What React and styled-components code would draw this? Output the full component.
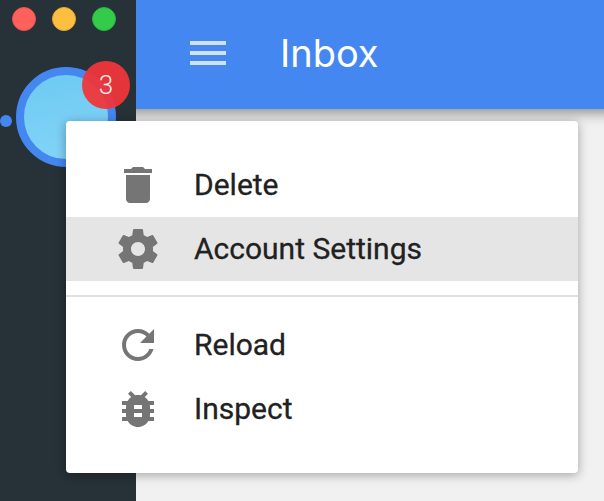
import React from "react";
import styled, { createGlobalStyle } from "styled-components";

const GlobalStyle = createGlobalStyle`
  * { box-sizing: border-box; }
  body { margin: 0; overflow: hidden; font-family: Roboto, sans-serif; -webkit-font-smoothing: antialiased; }
`;

const Window = styled.div`
  position: relative;
  display: flex;
  width: 604px;
  height: 501px;
  overflow: hidden;
  background: #f1f1f1;
`;

const Sidebar = styled.aside`
  display: flex;
  flex-direction: column;
  width: 136px;
  flex: none;
  background: #263238;
`;

const WindowControls = styled.div`
  display: flex;
  gap: 16px;
  padding: 7px 0 0 12px;
`;

const ControlDot = styled.span`
  width: 24px;
  height: 24px;
  border-radius: 50%;
  background: ${(p) => p.$color};
  border: 1px solid ${(p) => p.$edge};
`;

const Account = styled.div`
  position: relative;
  display: flex;
  align-items: center;
  gap: 4px;
  margin-top: 36px;
  height: 100px;
`;

const ActiveDot = styled.span`
  width: 12px;
  height: 12px;
  margin-top: 8px;
  border-radius: 50%;
  background: #4587f0;
`;

const Avatar = styled.div`
  width: 100px;
  height: 100px;
  border-radius: 50%;
  border: 8px solid #4587f0;
  background: linear-gradient(170deg, #6dcaf1, #84d4f8);
`;

const Badge = styled.span`
  position: absolute;
  left: 82px;
  top: -6px;
  width: 48px;
  height: 48px;
  border-radius: 50%;
  background: rgba(238, 54, 58, 0.95);
  color: #fdeced;
  font-size: 26px;
  font-weight: 300;
  line-height: 48px;
  text-align: center;
`;

const Main = styled.main`
  flex: 1;
  overflow: hidden;
`;

const AppBar = styled.header`
  display: flex;
  align-items: center;
  gap: 48px;
  height: 109px;
  margin: 0 -24px;
  padding: 0 72px 3px;
  background: #4587f0;
  color: #fff;
  box-shadow: 0 4px 12px rgba(0, 0, 0, 0.42);
`;

const Title = styled.h1`
  margin: 0;
  font-family: Inter, Roboto, sans-serif;
  font-size: 38px;
  font-weight: 400;
  line-height: 48px;
`;

const Menu = styled.nav`
  position: absolute;
  left: 66px;
  top: 121px;
  width: 512px;
  height: 352px;
  padding: 32px 0;
  border-radius: 4px;
  background: #fff;
  box-shadow: 0 2px 12px rgba(0, 0, 0, 0.24), 0 2px 8px rgba(0, 0, 0, 0.1);
`;

const MenuItem = styled.div`
  display: flex;
  align-items: center;
  gap: 32px;
  height: 64px;
  padding: 0 48px;
  background: ${(p) => (p.$active ? "#e5e5e5" : "transparent")};
  color: #212121;
  font-size: 30px;
  line-height: 64px;
  white-space: nowrap;
  -webkit-text-stroke: 0.3px #212121;
`;

const Divider = styled.hr`
  height: 2px;
  margin: 14px 0 16px;
  border: 0;
  background: #e0e0e0;
`;

const Glyph = styled.svg`
  flex: none;
  width: 48px;
  height: 48px;
  fill: ${(p) => p.$color || "#757575"};
`;

const ICONS = {
  menu: "M3 18h18v-2H3v2zm0-5h18v-2H3v2zm0-7v2h18V6H3z",
  trash: "M6 19c0 1.1.9 2 2 2h8c1.1 0 2-.9 2-2V7H6v12zM19 4h-3.5l-1-1h-5l-1 1H5v2h14V4z",
  settings:
    "M19.43 12.98c.04-.32.07-.64.07-.98s-.03-.66-.07-.98l2.11-1.65c.19-.15.24-.42.12-.64l-2-3.46c-.12-.22-.39-.3-.61-.22l-2.49 1c-.52-.4-1.08-.73-1.69-.98l-.38-2.65C14.46 2.18 14.25 2 14 2h-4c-.25 0-.46.18-.49.42l-.38 2.65c-.61.25-1.17.59-1.69.98l-2.49-1c-.23-.09-.49 0-.61.22l-2 3.46c-.13.22-.07.49.12.64l2.11 1.65c-.04.32-.07.65-.07.98s.03.66.07.98l-2.11 1.65c-.19.15-.24.42-.12.64l2 3.46c.12.22.39.3.61.22l2.49-1c.52.4 1.08.73 1.69.98l.38 2.65c.03.24.24.42.49.42h4c.25 0 .46-.18.49-.42l.38-2.65c.61-.25 1.17-.59 1.69-.98l2.49 1c.23.09.49 0 .61-.22l2-3.46c.12-.22.07-.49-.12-.64l-2.11-1.65zM12 15.5c-1.93 0-3.5-1.57-3.5-3.5s1.57-3.5 3.5-3.5 3.5 1.57 3.5 3.5-1.57 3.5-3.5 3.5z",
  reload:
    "M17.65 6.35C16.2 4.9 14.21 4 12 4c-4.42 0-7.99 3.58-7.99 8s3.57 8 7.99 8c3.73 0 6.84-2.55 7.73-6h-2.08c-.82 2.33-3.04 4-5.65 4-3.31 0-6-2.69-6-6s2.69-6 6-6c1.66 0 3.14.69 4.22 1.78L13 11h7V4l-2.35 2.35z",
  bug: "M20 8h-2.81c-.45-.78-1.07-1.45-1.82-1.96L17 4.41 15.59 3l-2.17 2.17C12.96 5.06 12.49 5 12 5c-.49 0-.96.06-1.41.17L8.41 3 7 4.41l1.62 1.63C7.88 6.55 7.26 7.22 6.81 8H4v2h2.09c-.05.33-.09.66-.09 1v1H4v2h2v1c0 .34.04.67.09 1H4v2h2.81c1.04 1.79 2.97 3 5.19 3s4.15-1.21 5.19-3H20v-2h-2.09c.05-.33.09-.66.09-1v-1h2v-2h-2v-1c0-.34-.04-.67-.09-1H20V8zm-6 8h-4v-2h4v2zm0-4h-4v-2h4v2z",
};

const Icon = ({ name, color }) => (
  <Glyph viewBox="0 0 24 24" $color={color} aria-hidden="true">
    <path d={ICONS[name]} />
  </Glyph>
);

export default function App() {
  return (
    <>
      <GlobalStyle />
      <Window>
        <Sidebar>
          <WindowControls>
            <ControlDot $color="#fe615c" $edge="#e9524d" />
            <ControlDot $color="#febe40" $edge="#e5a935" />
            <ControlDot $color="#34cb4a" $edge="#27b43a" />
          </WindowControls>
          <Account>
            <ActiveDot />
            <Avatar />
            <Badge>3</Badge>
          </Account>
        </Sidebar>
        <Main>
          <AppBar>
            <Icon name="menu" color="#d0e1fb" />
            <Title>Inbox</Title>
          </AppBar>
        </Main>
        <Menu>
          <MenuItem><Icon name="trash" />Delete</MenuItem>
          <MenuItem $active><Icon name="settings" />Account Settings</MenuItem>
          <Divider />
          <MenuItem><Icon name="reload" />Reload</MenuItem>
          <MenuItem><Icon name="bug" />Inspect</MenuItem>
        </Menu>
      </Window>
    </>
  );
}
